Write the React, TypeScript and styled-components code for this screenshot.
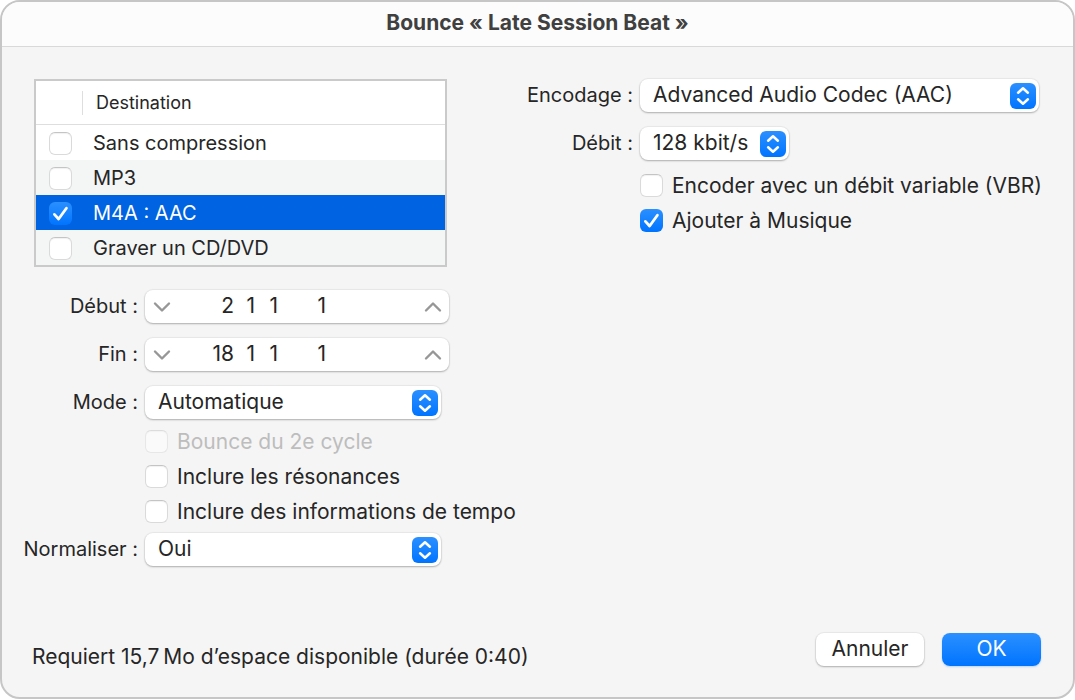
import React, { useId, useState } from "react";
import styled, { createGlobalStyle, css } from "styled-components";

const GlobalStyle = createGlobalStyle`
  *, *::before, *::after { box-sizing: border-box; }
  body {
    margin: 0;
    background: #ffffff;
    color: #262626;
    font-family: Inter, "Liberation Sans", sans-serif;
    font-size: 21px;
    line-height: 24px;
  }
  input, select, button { font: inherit; color: inherit; margin: 0; }
`;

const accent = "linear-gradient(#2b90ff, #0074ff)";

const raised = css`
  background: #ffffff;
  border: 0;
  border-radius: 8px;
  box-shadow: 0 0 1px 1px rgba(0, 0, 0, 0.05), 0 1px 2px rgba(0, 0, 0, 0.26);
`;

const Dialog = styled.main`
  display: flex;
  flex-direction: column;
  min-height: calc(100vh - 1px);
  background: #f5f5f5;
  border: 2px solid #c6c6c6;
  border-radius: 20px;
  overflow: hidden;
`;

const TitleBar = styled.header`
  display: flex;
  align-items: center;
  justify-content: center;
  height: 45px;
  padding-bottom: 2px;
  background: #fcfcfc;
  border-bottom: 1px solid #d9d9d9;
`;

const Title = styled.h1`
  margin: 0;
  font-size: 21px;
  font-weight: 700;
  color: #404040;
`;

const Content = styled.div`
  display: flex;
  padding: 32px 34px 0 18px;
`;

const LeftPane = styled.section`
  flex: none;
  width: 505px;
`;

const RightPane = styled.section`
  flex: 1;
  min-width: 0;
`;

const DestinationTable = styled.table`
  width: 413px;
  margin: 0 0 23px 14px;
  border: 2px solid #cacaca;
  border-collapse: separate;
  border-spacing: 0;
  background: #ffffff;
  table-layout: fixed;
  font-size: 20px;
`;

const HeadCell = styled.th<{ $narrow?: boolean }>`
  width: ${(p) => (p.$narrow ? "46px" : "auto")};
  height: 44px;
  padding: 0;
  border-bottom: 1px solid #dedede;
  font-size: 18px;
  font-weight: 400;
  text-align: left;
`;

const HeadLabel = styled.span`
  display: block;
  padding-left: 13px;
  border-left: 1px solid #dedede;
`;

const DestinationRow = styled.tr<{ $selected: boolean }>`
  height: 35px;
  background: ${(p) => (p.$selected ? "#0063e1" : "#ffffff")};
  color: ${(p) => (p.$selected ? "#ffffff" : "inherit")};

  &:nth-child(even) {
    background: #f4f5f5;
  }
`;

const TickCell = styled.td`
  padding: 0 0 0 13px;
  vertical-align: middle;
  line-height: 23px;
`;

const NameCell = styled.td`
  padding: 0 0 0 11px;
  vertical-align: middle;
`;

const TickBox = styled.span<{ $disabled?: boolean }>`
  display: inline-grid;
  flex: none;
  width: 23px;
  height: 23px;
  vertical-align: middle;
  opacity: ${(p) => (p.$disabled ? 0.5 : 1)};

  > * {
    grid-area: 1 / 1;
  }
  > svg {
    pointer-events: none;
    visibility: hidden;
  }
  > input:checked + svg {
    visibility: visible;
  }
`;

const TickInput = styled.input`
  appearance: none;
  width: 23px;
  height: 23px;
  border: 1px solid #dadada;
  border-top-color: #c4c4c4;
  border-radius: 6px;
  background: #ffffff;
  box-shadow: inset 0 1px 1px rgba(0, 0, 0, 0.06);

  &:checked {
    border: 0;
    background: ${accent};
    box-shadow: none;
  }
`;

const Form = styled.div<{ $labels: string }>`
  display: grid;
  grid-template-columns: ${(p) => p.$labels} minmax(0, 1fr);
  column-gap: 7px;
  row-gap: 15px;
  align-items: center;
`;

const FieldLabel = styled.label`
  padding-bottom: 2px;
  justify-self: end;
  font-size: 20px;
  white-space: nowrap;
`;

const CheckGroup = styled.div<{ $pull?: boolean }>`
  grid-column: 2;
  margin: ${(p) => (p.$pull ? "-10px 0 -11px" : "-7px 0 0")};
`;

const CheckLabel = styled.label<{ $disabled?: boolean }>`
  display: flex;
  align-items: center;
  gap: 9px;
  height: 35px;
  white-space: nowrap;
  color: ${(p) => (p.$disabled ? "#bdbdbd" : "inherit")};
`;

const SelectFrame = styled.span<{ $width: string }>`
  display: grid;
  width: ${(p) => p.$width};
  align-items: center;

  > * {
    grid-area: 1 / 1;
  }
`;

const NativeSelect = styled.select`
  ${raised}
  appearance: none;
  width: 100%;
  height: 33px;
  padding: 0 34px 2px 13px;
`;

const SelectBadge = styled.span`
  justify-self: end;
  width: 26px;
  height: 26px;
  margin-right: 3px;
  border-radius: 6px;
  background: ${accent};
  pointer-events: none;

  > svg {
    display: block;
  }
`;

const PositionField = styled.div`
  ${raised}
  display: flex;
  align-items: center;
  width: 304px;
  height: 33px;
`;

const StepButton = styled.button`
  display: flex;
  align-items: center;
  justify-content: center;
  width: 33px;
  height: 33px;
  padding: 0;
  border: 0;
  background: none;
`;

const Segments = styled.div`
  display: grid;
  flex: 1;
  grid-template-columns: 56px 21px 23px 48px;
`;

const Segment = styled.input`
  width: 100%;
  height: 31px;
  padding: 0 0 2px;
  border: 0;
  background: none;
  text-align: right;
`;

const Footer = styled.footer`
  display: flex;
  align-items: flex-end;
  justify-content: space-between;
  margin-top: auto;
  padding: 0 32px 28px 30px;
`;

const SpaceNote = styled.p`
  margin: 0;
`;

const Actions = styled.div`
  display: flex;
  gap: 18px;
  padding-bottom: 3px;
`;

const ActionButton = styled.button<{ $primary?: boolean }>`
  ${raised}
  min-width: ${(p) => (p.$primary ? "99px" : "108px")};
  height: 33px;
  padding: 0 12px 2px;
  ${(p) =>
    p.$primary &&
    css`
      background: ${accent};
      color: #ffffff;
      box-shadow: 0 1px 2px rgba(0, 116, 255, 0.25);
    `}
`;

type TickProps = {
  id?: string;
  initial?: boolean;
  disabled?: boolean;
  label?: string;
};

function Tick({ id, initial = false, disabled, label }: TickProps) {
  const [on, setOn] = useState(initial);
  return (
    <TickBox $disabled={disabled}>
      <TickInput
        id={id}
        type="checkbox"
        checked={on}
        disabled={disabled}
        aria-label={label}
        onChange={(e) => setOn(e.target.checked)}
      />
      <svg width="23" height="23" viewBox="0 0 23 23" aria-hidden="true">
        <path
          d="M5.4 12.4 L9.6 17 L17.4 6.2"
          fill="none"
          stroke="#fff"
          strokeWidth="2.8"
          strokeLinecap="round"
          strokeLinejoin="round"
        />
      </svg>
    </TickBox>
  );
}

function Check({ text, initial, disabled }: { text: string; initial?: boolean; disabled?: boolean }) {
  const id = useId();
  return (
    <CheckLabel htmlFor={id} $disabled={disabled}>
      <Tick id={id} initial={initial} disabled={disabled} />
      {text}
    </CheckLabel>
  );
}

function SelectRow({ label, options, width }: { label: string; options: string[]; width: string }) {
  const id = useId();
  return (
    <>
      <FieldLabel htmlFor={id}>{label}</FieldLabel>
      <SelectFrame $width={width}>
        <NativeSelect id={id}>
          {options.map((o) => (
            <option key={o}>{o}</option>
          ))}
        </NativeSelect>
        <SelectBadge>
          <svg width="26" height="26" viewBox="0 0 26 26" aria-hidden="true">
            <path
              d="M8.1 9.7 L13 5.3 L17.9 9.7 M8.1 16.3 L13 20.7 L17.9 16.3"
              fill="none"
              stroke="#fff"
              strokeWidth="2.5"
              strokeLinecap="round"
              strokeLinejoin="round"
            />
          </svg>
        </SelectBadge>
      </SelectFrame>
    </>
  );
}

function Chevron({ up }: { up?: boolean }) {
  return (
    <svg width="18" height="12" viewBox="0 0 18 12" aria-hidden="true">
      <path
        d={up ? "M2 9.5 L9 2.5 L16 9.5" : "M2 2.5 L9 9.5 L16 2.5"}
        fill="none"
        stroke="#979797"
        strokeWidth="2.4"
        strokeLinecap="round"
        strokeLinejoin="round"
      />
    </svg>
  );
}

const units = ["mesure", "temps", "division", "tick"];

function PositionRow({ label, name, values }: { label: string; name: string; values: string[] }) {
  const id = useId();
  return (
    <>
      <FieldLabel htmlFor={id}>{label}</FieldLabel>
      <PositionField role="group" aria-label={name}>
        <StepButton type="button" aria-label={`${name} : diminuer`}>
          <Chevron />
        </StepButton>
        <Segments>
          {values.map((v, i) => (
            <Segment
              key={units[i]}
              id={i === 0 ? id : undefined}
              aria-label={i === 0 ? undefined : `${name} : ${units[i]}`}
              defaultValue={v}
            />
          ))}
        </Segments>
        <StepButton type="button" aria-label={`${name} : augmenter`}>
          <Chevron up />
        </StepButton>
      </PositionField>
    </>
  );
}

const destinations = [
  { name: "Sans compression" },
  { name: "MP3" },
  { name: "M4A : AAC", selected: true },
  { name: "Graver un CD/DVD" },
];

export default function App() {
  return (
    <>
      <GlobalStyle />
      <Dialog>
        <TitleBar>
          <Title>Bounce « Late Session Beat »</Title>
        </TitleBar>
        <Content>
          <LeftPane>
            <DestinationTable>
              <thead>
                <tr>
                  <HeadCell $narrow />
                  <HeadCell>
                    <HeadLabel>Destination</HeadLabel>
                  </HeadCell>
                </tr>
              </thead>
              <tbody>
                {destinations.map((d) => (
                  <DestinationRow key={d.name} $selected={!!d.selected}>
                    <TickCell>
                      <Tick initial={d.selected} label={d.name} />
                    </TickCell>
                    <NameCell>{d.name}</NameCell>
                  </DestinationRow>
                ))}
              </tbody>
            </DestinationTable>
            <Form $labels="118px">
              <PositionRow label="Début :" name="Début" values={["2", "1", "1", "1"]} />
              <PositionRow label="Fin :" name="Fin" values={["18", "1", "1", "1"]} />
              <SelectRow label="Mode :" options={["Automatique"]} width="296px" />
              <CheckGroup $pull>
                <Check text="Bounce du 2e cycle" disabled />
                <Check text="Inclure les résonances" />
                <Check text="Inclure des informations de tempo" />
              </CheckGroup>
              <SelectRow label="Normaliser :" options={["Oui"]} width="296px" />
            </Form>
          </LeftPane>
          <RightPane>
            <Form $labels="108px">
              <SelectRow label="Encodage :" options={["Advanced Audio Codec (AAC)"]} width="100%" />
              <SelectRow label="Débit :" options={["128 kbit/s"]} width="149px" />
              <CheckGroup>
                <Check text="Encoder avec un débit variable (VBR)" />
                <Check text="Ajouter à Musique" initial />
              </CheckGroup>
            </Form>
          </RightPane>
        </Content>
        <Footer>
          <SpaceNote>Requiert 15,7{"\u2009"}Mo d’espace disponible (durée 0:40)</SpaceNote>
          <Actions>
            <ActionButton type="button">Annuler</ActionButton>
            <ActionButton type="button" $primary>
              OK
            </ActionButton>
          </Actions>
        </Footer>
      </Dialog>
    </>
  );
}
